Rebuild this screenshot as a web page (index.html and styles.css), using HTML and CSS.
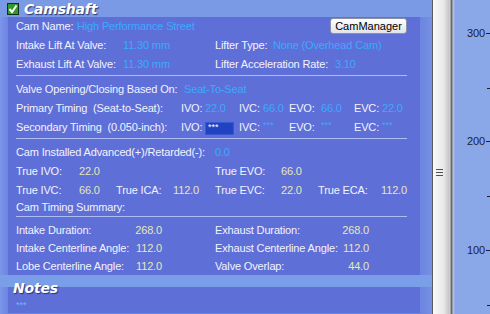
FILE: index.html
```html
<!DOCTYPE html>
<html lang="en">

<head>
  <meta charset="UTF-8">
  <title>Camshaft</title>
  <link rel="stylesheet" href="styles.css">
</head>

<body>
  <div class="app">
    <div class="main">
      <!-- Camshaft header -->
      <div class="band">
        <span class="check">
          <svg width="10" height="10" viewBox="0 0 10 10"><path d="M1.5 5 L4 8 L8.5 1.5" fill="none" stroke="#fff" stroke-width="2"/></svg>
        </span>
        <span class="title">Camshaft</span>
      </div>

      <div class="panel">
        <div class="section">
          <div class="row">
            <span class="lbl name">Cam Name:</span><span class="val blue">High Performance Street</span>
            <button class="btn">CamManager</button>
          </div>
          <div class="row">
            <div class="half">
              <span class="lbl lift">Intake Lift At Valve:</span><span class="val blue">11.30 mm</span>
            </div>
            <div class="half">
              <span class="lbl ltype">Lifter Type:</span><span class="val blue">None (Overhead Cam)</span>
            </div>
          </div>
          <div class="row">
            <div class="half">
              <span class="lbl lift">Exhaust Lift At Valve:</span><span class="val blue">11.30 mm</span>
            </div>
            <div class="half">
              <span class="lbl lrate">Lifter Acceleration Rate:</span><span class="val blue">3.10</span>
            </div>
          </div>
        </div>

        <div class="sep"></div>

        <div class="section">
          <div class="row">
            <span class="lbl based">Valve Opening/Closing Based On:</span><span class="val blue">Seat-To-Seat</span>
          </div>
          <div class="row">
            <span class="lbl timing">Primary Timing &nbsp;(Seat-to-Seat):</span>
            <span class="key k-ivo">IVO:</span><span class="val blue v-ivo">22.0</span>
            <span class="key k-ivc">IVC:</span><span class="val blue v-ivc">66.0</span>
            <span class="key k-evo">EVO:</span><span class="val blue v-evo">66.0</span>
            <span class="key k-evc">EVC:</span><span class="val blue">22.0</span>
          </div>
          <div class="row">
            <span class="lbl timing">Secondary Timing &nbsp;(0.050-inch):</span>
            <span class="key k-ivo">IVO:</span><span class="val v-ivo"><span class="field">***</span></span>
            <span class="key k-ivc">IVC:</span><span class="val blue v-ivc"><span class="stars">***</span></span>
            <span class="key k-evo">EVO:</span><span class="val blue v-evo"><span class="stars">***</span></span>
            <span class="key k-evc">EVC:</span><span class="val blue"><span class="stars">***</span></span>
          </div>
        </div>

        <div class="sep"></div>

        <div class="section">
          <div class="row">
            <span class="lbl installed">Cam Installed Advanced(+)/Retarded(-):</span><span class="val blue">0.0</span>
          </div>
          <div class="row">
            <div class="half">
              <span class="lbl tk">True IVO:</span><span class="val pale">22.0</span>
            </div>
            <div class="half">
              <span class="lbl tk-r">True EVO:</span><span class="val pale">66.0</span>
            </div>
          </div>
          <div class="row">
            <div class="half">
              <span class="lbl tk">True IVC:</span><span class="val pale tv">66.0</span>
              <span class="lbl">True ICA:</span><span class="val pale end">112.0</span>
            </div>
            <div class="half">
              <span class="lbl tk-r">True EVC:</span><span class="val pale tv">22.0</span>
              <span class="lbl">True ECA:</span><span class="val pale end">112.0</span>
            </div>
          </div>
          <div class="row short">
            <span class="lbl">Cam Timing Summary:</span>
          </div>
        </div>

        <div class="sep"></div>

        <div class="section dense">
          <div class="row">
            <div class="half">
              <span class="lbl sum">Intake Duration:</span><span class="val pale num">268.0</span>
            </div>
            <div class="half">
              <span class="lbl sum-r">Exhaust Duration:</span><span class="val pale num">268.0</span>
            </div>
          </div>
          <div class="row">
            <div class="half">
              <span class="lbl sum">Intake Centerline Angle:</span><span class="val pale num">112.0</span>
            </div>
            <div class="half">
              <span class="lbl sum-r">Exhaust Centerline Angle:</span><span class="val pale num">112.0</span>
            </div>
          </div>
          <div class="row">
            <div class="half">
              <span class="lbl sum">Lobe Centerline Angle:</span><span class="val pale num">112.0</span>
            </div>
            <div class="half">
              <span class="lbl sum-r">Valve Overlap:</span><span class="val pale num">44.0</span>
            </div>
          </div>
        </div>
      </div>

      <!-- Notes header -->
      <div class="band band-notes">
        <span class="title">Notes</span>
      </div>
      <div class="panel panel-notes">
        <span class="stars notes-text">***</span>
      </div>
    </div>

    <div class="splitter">
      <span class="grip"></span>
    </div>

    <div class="chart">
      <svg width="35" height="314" viewBox="0 0 35 314">
        <g font-family="Liberation Sans, Arial, sans-serif" font-size="11" fill="#1c1c34" text-anchor="end">
          <text x="30" y="37">300</text>
          <text x="30" y="145">200</text>
          <text x="30" y="254">100</text>
        </g>
        <g stroke="#1c1c34" stroke-width="1">
          <line x1="31" y1="33.5" x2="35" y2="33.5"/>
          <line x1="32" y1="88.5" x2="35" y2="88.5"/>
          <line x1="31" y1="141.5" x2="35" y2="141.5"/>
          <line x1="32" y1="196.5" x2="35" y2="196.5"/>
          <line x1="31" y1="250.5" x2="35" y2="250.5"/>
          <line x1="32" y1="305.5" x2="35" y2="305.5"/>
        </g>
      </svg>
    </div>
  </div>
</body>

</html>
```

FILE: styles.css
```css
/* base */
body {
  margin: 0;
  font-family: "Liberation Sans", Arial, sans-serif;
  font-size: 11px;
  letter-spacing: -0.15px;
  color: #f2f3ff;
  background: #8aa7e8;
}

.app {
  display: flex;
  width: 490px;
  height: 314px;
  overflow: hidden;
}

/* left column with the two groups */
.main {
  width: 432px;
  height: 314px;
  background: linear-gradient(to right, #7d96ea 0, #6c85e0 8px, #6c85e0 420px, #7590e4 432px);
}

.band {
  height: 17px;
  display: flex;
  align-items: center;
  background: #7a9ae6;
  padding-left: 7px;
}

.check {
  width: 10px;
  height: 10px;
  border: 1px solid #10301a;
  background: #2f9a2a;
  display: flex;
  margin-right: 5px;
}

.title {
  font-family: "DejaVu Sans", Verdana, sans-serif;
  font-weight: bold;
  font-style: italic;
  font-size: 14px;
  color: #fff;
  text-shadow: 1px 1px 1px #2a3470;
  letter-spacing: -0.2px;
}

.band-notes {
  height: 12px;
  background: #7a9fe8;
  padding-left: 13px;
  align-items: flex-start;
}

.band-notes .title {
  line-height: 12px;
  padding-top: 7px;
}

.panel {
  background: #5f6fd8;
  margin: 0 12px 0 8px;
  padding: 1px 13px 1px 8px;
}

.panel-notes {
  height: 26px;
  padding-top: 12px;
  box-sizing: border-box;
}

.notes-text {
  color: #6fb6ff;
}

/* rows */
.section {
  display: flex;
  flex-direction: column;
  gap: 3px;
}

.section.dense {
  gap: 2px;
}

.sep {
  height: 1px;
  background: #aebcf2;
  margin: 3px 0 5px;
}

.row {
  height: 16px;
  line-height: 16px;
  display: flex;
  align-items: center;
  white-space: nowrap;
}

.row.short {
  height: 12px;
  line-height: 12px;
}

.half {
  display: flex;
  align-items: center;
}

.half:first-child {
  width: 183px;
  margin-right: 16px;
}

.half:last-child {
  flex: 1;
}

.lbl,
.key,
.val {
  display: inline-block;
}

.name { width: 61px; }
.lift { width: 107px; }
.ltype { width: 58px; }
.lrate { width: 120px; }
.based { width: 168px; }
.timing { width: 165px; }
.installed { width: 199px; }
.tk { width: 63px; }
.tk-r { width: 66px; }
.tv { width: 37px; }
.sum { width: 110px; }
.sum-r { width: 118px; }

.key { color: #f2f3ff; }
.k-ivo { width: 24px; }
.k-ivc { width: 24px; }
.k-evo { width: 32px; }
.k-evc { width: 28px; }
.v-ivo { width: 34px; }
.v-ivc { width: 26px; }
.v-evo { width: 33px; }

.blue { color: #3aaaff; }
.pale { color: #e3e9b6; }

.end {
  margin-left: auto;
}

.num {
  width: 36px;
  text-align: right;
}

.stars {
  font-size: 9px;
  letter-spacing: 0;
  vertical-align: top;
  line-height: 12px;
}

.field {
  display: inline-block;
  width: 29px;
  height: 13px;
  background: #2142c2;
  border: 1px solid #3a58d0;
  color: #fff;
  font-size: 9px;
  letter-spacing: 0;
  line-height: 9px;
  padding-left: 2px;
  box-sizing: border-box;
  vertical-align: middle;
}

/* CamManager button */
.btn {
  margin-left: auto;
  width: 77px;
  height: 16px;
  padding: 0;
  font-family: "Liberation Sans", Arial, sans-serif;
  font-size: 11px;
  color: #000;
  border: 1px solid #8c93a8;
  border-radius: 3px;
  background: linear-gradient(#ffffff, #e2e2e8);
}

/* splitter between panel and chart */
.splitter {
  width: 23px;
  display: flex;
  align-items: center;
  justify-content: flex-start;
  background: linear-gradient(to right, #5a5a5a 0, #5a5a5a 1px, #fafafa 1px, #e8e8e8 12px, #c4c4c4 17px, #d8d8d8 18px, #6a6a6a 19px, #6a6a6a 20px, #c0c8e0 21px, #8aa7e8 23px);
}

.grip {
  width: 7px;
  height: 7px;
  margin-left: 4px;
  margin-top: 30px;
  background: repeating-linear-gradient(#505050 0, #505050 1px, transparent 1px, transparent 3px);
}

.chart {
  flex: 1;
  background: #8aa7e8;
}
```
